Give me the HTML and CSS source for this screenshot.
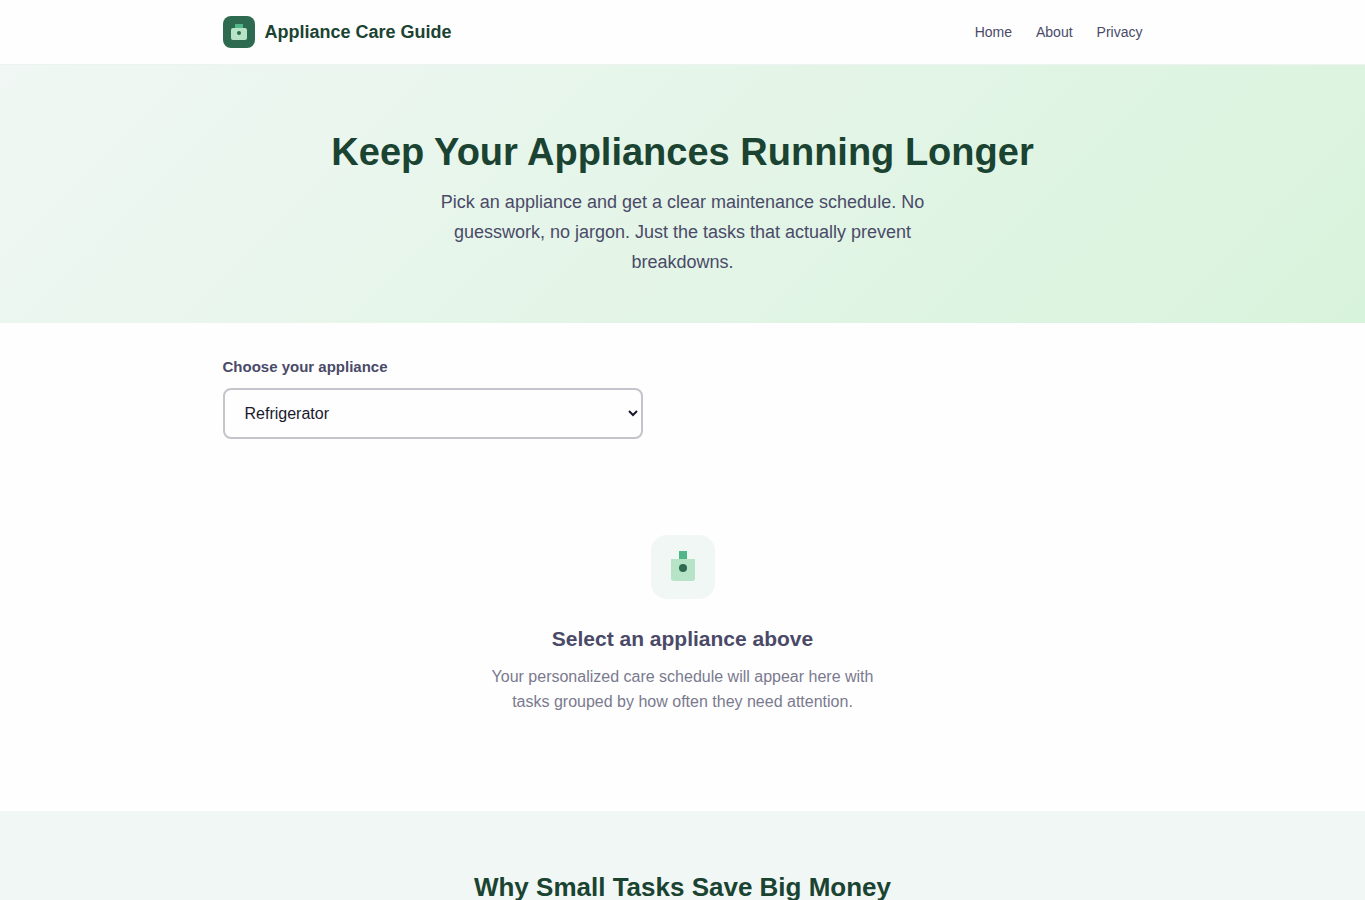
FILE: index.html
```html
<!DOCTYPE html>
<html lang="en">
<head>
<meta charset="utf-8">
<meta name="viewport" content="width=device-width, initial-scale=1">
<title>Appliance Care Guide</title>
<link rel="stylesheet" href="styles.css">
</head>
<body>
<header class="site-header">
  <div class="container header-inner">
    <a class="logo" href="#">
      <svg class="logo-icon" viewBox="0 0 32 32" aria-hidden="true">
        <rect width="32" height="32" rx="8" fill="#2d6a4f"/>
        <rect x="12" y="8" width="8" height="4" fill="#52b788"/>
        <rect x="8" y="12" width="16" height="12" rx="2" fill="#b7e4c7"/>
        <circle cx="16" cy="17" r="2" fill="#2d6a4f"/>
      </svg>
      <span>Appliance Care Guide</span>
    </a>
    <nav class="site-nav">
      <a href="#">Home</a>
      <a href="#">About</a>
      <a href="#">Privacy</a>
    </nav>
  </div>
</header>
<main>
  <section class="hero">
    <div class="container">
      <h1>Keep Your Appliances Running Longer</h1>
      <p>Pick an appliance and get a clear maintenance schedule. No guesswork, no jargon. Just the tasks that actually prevent breakdowns.</p>
    </div>
  </section>
  <section class="container tool">
    <label for="appliance">Choose your appliance</label>
    <select id="appliance">
      <option>Refrigerator</option>
    </select>
    <div class="empty-state">
      <svg class="empty-icon" viewBox="0 0 64 64" aria-hidden="true">
        <rect width="64" height="64" rx="16" fill="#f0f7f4"/>
        <rect x="28" y="16" width="8" height="8" fill="#52b788"/>
        <path d="M20 24h24v19a3 3 0 0 1-3 3H23a3 3 0 0 1-3-3z" fill="#b7e4c7"/>
        <circle cx="32" cy="33" r="4" fill="#2d6a4f"/>
      </svg>
      <h2>Select an appliance above</h2>
      <p>Your personalized care schedule will appear here with tasks grouped by how often they need attention.</p>
    </div>
  </section>
  <section class="why">
    <div class="container">
      <h2>Why Small Tasks Save Big Money</h2>
    </div>
  </section>
</main>
</body>
</html>
```
FILE: styles.css
```css
* {
  box-sizing: border-box;
  margin: 0;
  padding: 0;
}

body {
  background: #fefefe;
  color: #1a1a2e;
  font-family: "Liberation Sans", Arial, sans-serif;
  font-size: 16px;
  line-height: 25px;
}

.container {
  max-width: 960px;
  margin: 0 auto;
  padding: 0 20px;
}

.site-header {
  border-bottom: 1px solid #edf3f0;
}

.header-inner {
  display: flex;
  align-items: center;
  justify-content: space-between;
  padding-top: 16px;
  padding-bottom: 16px;
}

.logo {
  display: flex;
  align-items: center;
  gap: 10px;
  color: #1b4332;
  font-size: 18px;
  font-weight: 700;
  text-decoration: none;
}

.logo-icon {
  width: 32px;
  height: 32px;
}

.site-nav {
  display: flex;
  gap: 24px;
}

.site-nav a {
  color: #4a4a68;
  font-size: 14px;
  line-height: 24px;
  text-decoration: none;
}

.hero {
  padding: 64px 0 46px;
  background: linear-gradient(135deg, #f0f7f4 0%, #d8f3dc 100%);
  text-align: center;
}

.hero h1 {
  margin-bottom: 12px;
  color: #1b4332;
  font-size: 38px;
  line-height: 46px;
}

.hero p {
  max-width: 520px;
  margin: 0 auto;
  color: #4a4a68;
  font-size: 18px;
  line-height: 30px;
}

.tool {
  padding-top: 32px;
}

.tool label {
  display: block;
  margin-bottom: 9px;
  color: #4a4a68;
  font-size: 15px;
  font-weight: 700;
  line-height: 24px;
}

.tool select {
  display: block;
  width: 100%;
  max-width: 420px;
  padding: 14px 16px;
  border: 2px solid #c4c4cc;
  border-radius: 8px;
  background: #fefefe;
  color: #1a1a2e;
  font-family: inherit;
  font-size: 16px;
}

.empty-state {
  padding: 96px 0 97px;
  text-align: center;
}

.empty-icon {
  display: block;
  width: 64px;
  height: 64px;
  margin: 0 auto 24px;
}

.empty-state h2 {
  margin-bottom: 9px;
  color: #4a4a68;
  font-size: 21px;
  line-height: 32px;
}

.empty-state p {
  max-width: 400px;
  margin: 0 auto;
  color: #7a7a8e;
}

.why {
  padding: 56px 0;
  background: #f0f7f4;
  text-align: center;
}

.why h2 {
  color: #1b4332;
  font-size: 26px;
  line-height: 41px;
}
```
